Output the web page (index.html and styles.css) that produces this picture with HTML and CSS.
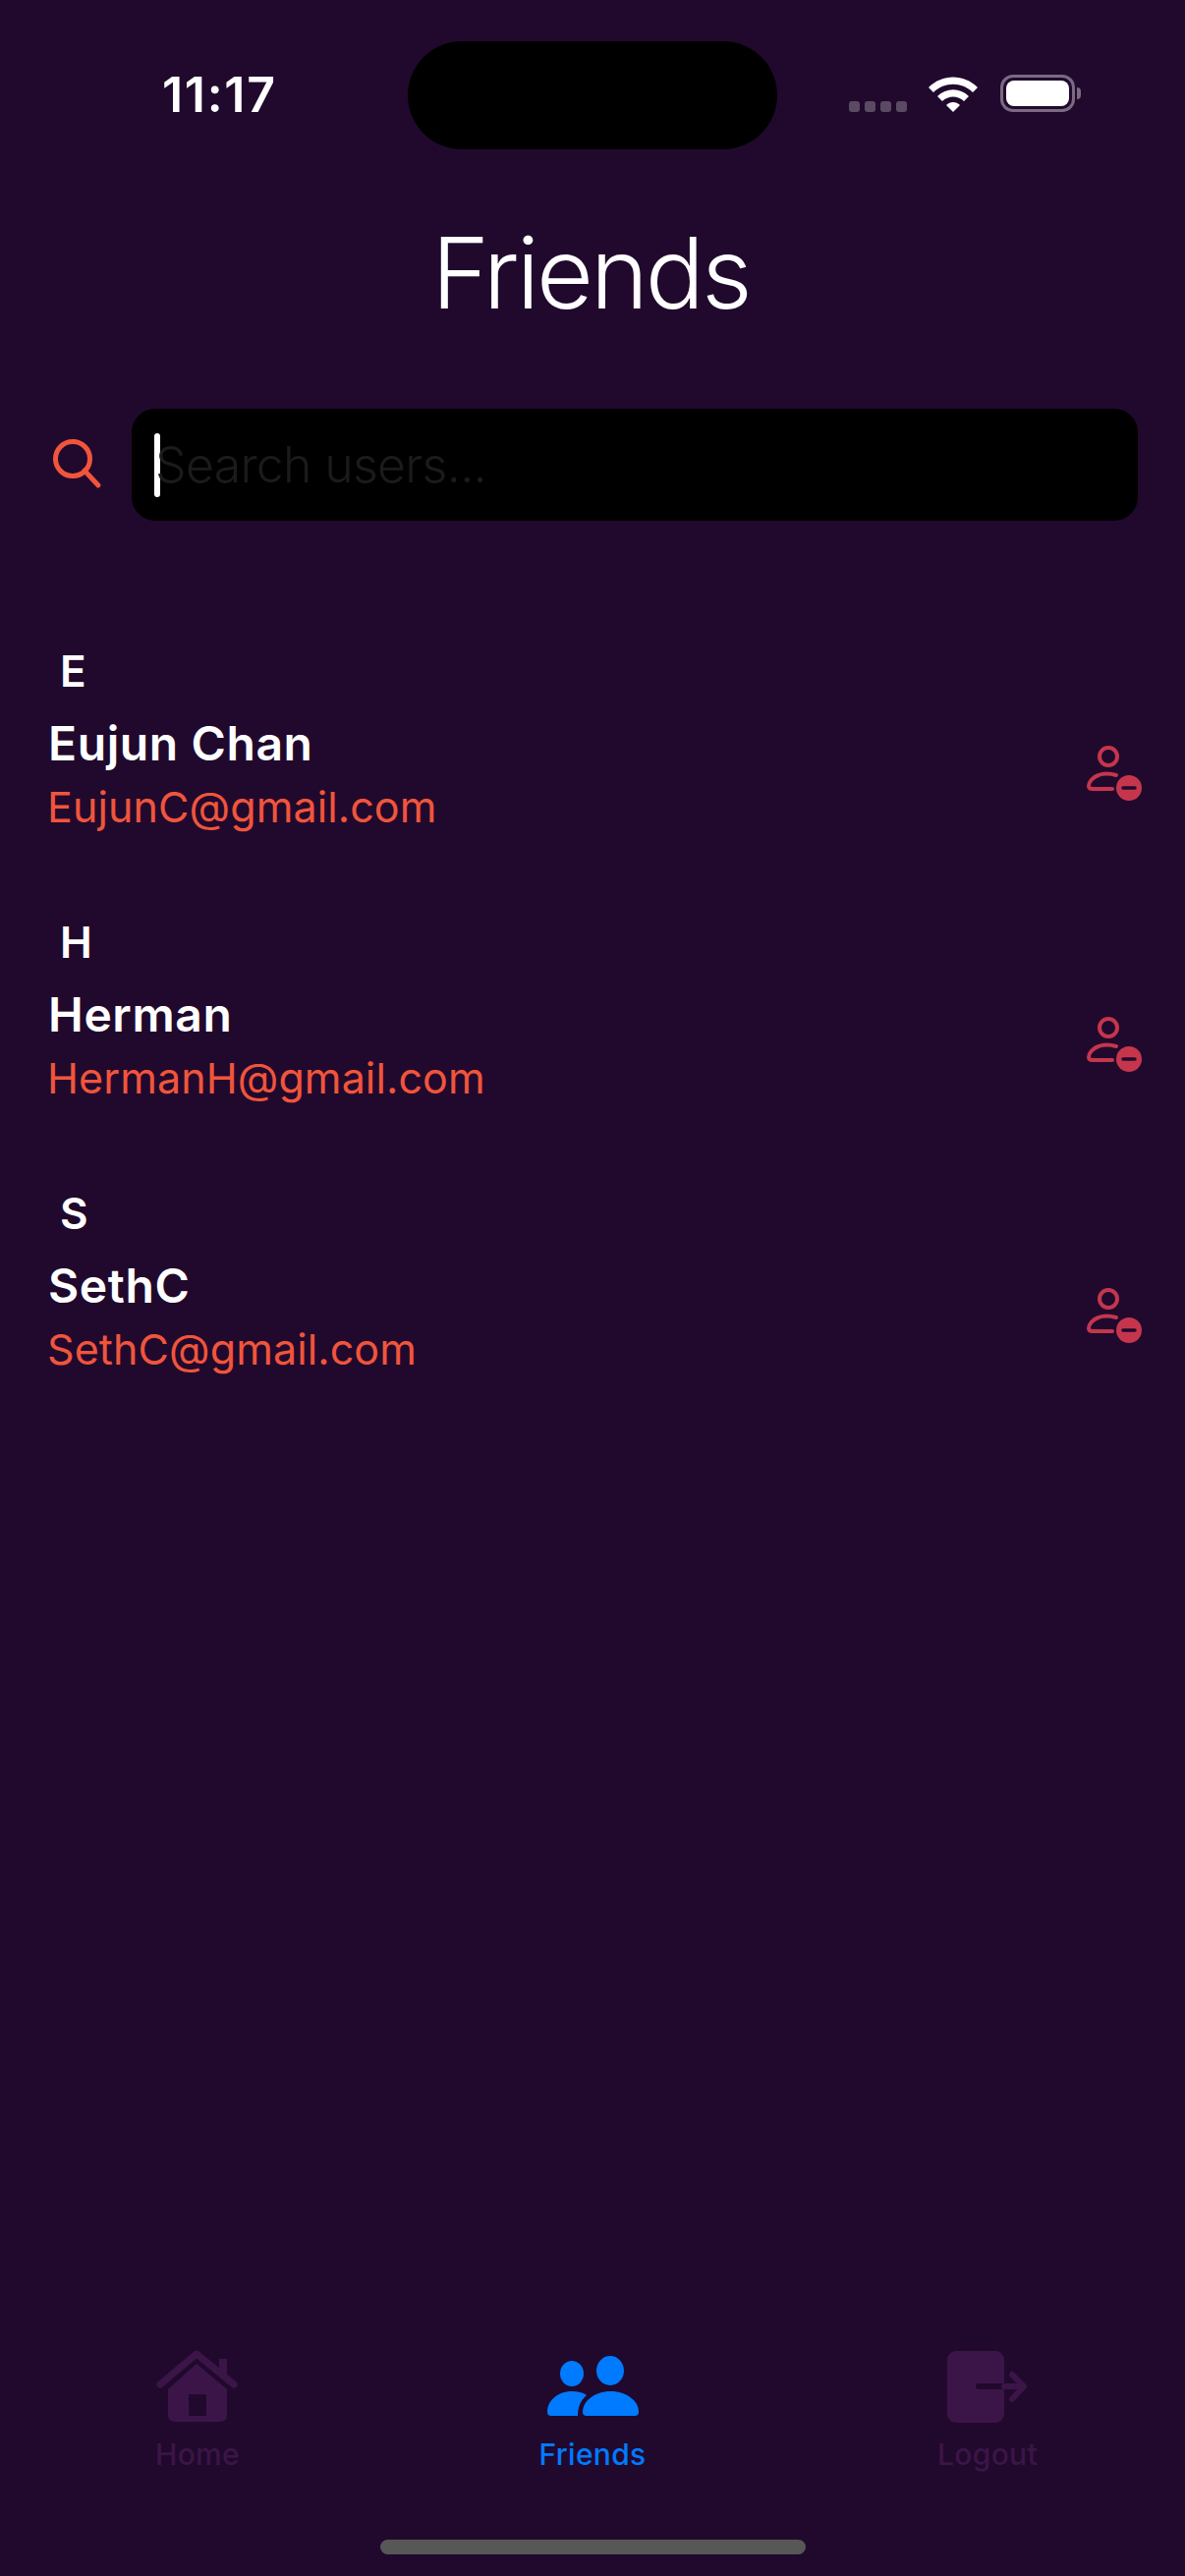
FILE: index.html
```html
<!DOCTYPE html>
<html lang="en">
  <head>
    <meta charset="UTF-8" />
    <title>Friends</title>
    <link rel="stylesheet" href="styles.css">
  </head>
  <body>
    <div id="screen">
      <div id="island"></div>

      <div id="status">
        <span id="time">11:17</span>
        <div id="status-icons">
          <div id="signal"><i></i><i></i><i></i><i></i></div>
          <svg id="wifi" width="52" height="38" viewBox="0 0 52 38">
            <path d="M1 13 C15 -1 37 -1 51 13 L46 18 C35 7 17 7 6 18Z" />
            <path d="M10 22 C19 13 33 13 42 22 L37 27 C31 21 21 21 15 27Z" />
            <path d="M19 31 C23 27 29 27 33 31 L26 38Z" />
          </svg>
          <div id="battery"><div id="battery-fill"></div></div>
          <div id="battery-nub"></div>
        </div>
      </div>

      <h1 id="title">Friends</h1>

      <div id="search">
        <svg class="search-icon" width="52" height="52" viewBox="0 0 52 52">
          <circle cx="21" cy="20" r="17.5" />
          <path d="M33 32 L47 47" />
        </svg>
        <div id="search-box">
          <span id="caret"></span>
          <span id="placeholder">Search users...</span>
        </div>
      </div>

      <ul id="friends">
        <li class="friend">
          <div class="letter">E</div>
          <div class="friend-row">
            <div class="friend-text">
              <div class="name">Eujun Chan</div>
              <div class="email">EujunC@gmail.com</div>
            </div>
            <svg class="remove" width="58" height="58" viewBox="26 18 58 58">
              <circle class="line" cx="49" cy="29" r="9" />
              <path class="line" d="M57 48 C50 46 44 46 39 48 C33 50 29 55 29 59 C29 61 30 62 33 62 H53" />
              <circle class="fill" cx="70" cy="61" r="13" />
              <path class="bar" d="M64 61 H76" />
            </svg>
          </div>
        </li>
        <li class="friend">
          <div class="letter">H</div>
          <div class="friend-row">
            <div class="friend-text">
              <div class="name">Herman</div>
              <div class="email">HermanH@gmail.com</div>
            </div>
            <svg class="remove" width="58" height="58" viewBox="26 18 58 58">
              <circle class="line" cx="49" cy="29" r="9" />
              <path class="line" d="M57 48 C50 46 44 46 39 48 C33 50 29 55 29 59 C29 61 30 62 33 62 H53" />
              <circle class="fill" cx="70" cy="61" r="13" />
              <path class="bar" d="M64 61 H76" />
            </svg>
          </div>
        </li>
        <li class="friend">
          <div class="letter">S</div>
          <div class="friend-row">
            <div class="friend-text">
              <div class="name">SethC</div>
              <div class="email">SethC@gmail.com</div>
            </div>
            <svg class="remove" width="58" height="58" viewBox="26 18 58 58">
              <circle class="line" cx="49" cy="29" r="9" />
              <path class="line" d="M57 48 C50 46 44 46 39 48 C33 50 29 55 29 59 C29 61 30 62 33 62 H53" />
              <circle class="fill" cx="70" cy="61" r="13" />
              <path class="bar" d="M64 61 H76" />
            </svg>
          </div>
        </li>
      </ul>

      <div id="tabs">
        <div class="tab">
          <svg width="84" height="76" viewBox="38 32 84 76">
            <path class="dim" d="M102 41 H110 V58 H102Z" />
            <path class="roof" d="M42 67 L79 36 L117 67" />
            <path class="dim" fill-rule="evenodd" d="M79 46 L110 72 V98 Q110 105 103 105 H57 Q50 105 50 98 V72Z M71 77 V99 H89 V77Z" />
          </svg>
          <span>Home</span>
        </div>
        <div class="tab tab-sel">
          <svg width="100" height="76" viewBox="52 32 100 76">
            <ellipse cx="120" cy="53" rx="14" ry="15" />
            <ellipse cx="81" cy="56" rx="12" ry="13" />
            <path d="M92 95 C92 84 104 74 120.5 74 C137 74 149 84 149 95 A4 4 0 0 1 145 99 H96 A4 4 0 0 1 92 95Z" />
            <path d="M56 95 C56 84 66 74 81 74 C87 74 92 75 96 78 C90 83 87 90 87 99 H60 A4 4 0 0 1 56 95Z" />
          </svg>
          <span>Friends</span>
        </div>
        <div class="tab">
          <svg width="90" height="76" viewBox="60 32 90 76">
            <rect class="dim" x="64" y="33" width="58" height="73" rx="9" />
            <path class="cut" d="M96 69 H122" />
            <path class="arrow" d="M122 69 H141 M130 57 L142 69 L130 82" />
          </svg>
          <span>Logout</span>
        </div>
      </div>

      <div id="home-bar"></div>
    </div>
  </body>
</html>
```

FILE: styles.css
```css
* {
  margin: 0;
  padding: 0;
  box-sizing: border-box;
}
li {
  list-style: none;
}

body {
  background: #21092d;
  font-family: Inter, "Noto Sans", sans-serif;
  color: #fff;
}

#screen {
  width: 1206px;
  height: 2622px;
  position: relative;
  overflow: hidden;
  display: flex;
  flex-direction: column;
}

#island {
  position: absolute;
  left: 415px;
  top: 42px;
  width: 376px;
  height: 110px;
  border-radius: 55px;
  background: #000;
}

/* status bar */
#status {
  height: 192px;
  padding: 66px 106px 0 165px;
  display: flex;
  justify-content: space-between;
  align-items: flex-start;
}

#time {
  font-size: 50px;
  line-height: 60px;
  font-weight: 600;
  letter-spacing: 1.7px;
}

#status-icons {
  display: flex;
  align-items: flex-start;
  padding-top: 10px;
}

#signal {
  display: flex;
  gap: 5px;
  margin-top: 27px;
  margin-right: 21px;
}

#signal i {
  width: 11px;
  height: 11px;
  border-radius: 3px;
  background: #5b4a64;
}

#wifi {
  fill: #fff;
  margin-right: 22px;
}

#battery {
  width: 76px;
  height: 38px;
  border: 3px solid #7a6a82;
  border-radius: 13px;
  padding: 3px;
}

#battery-fill {
  height: 100%;
  background: #fff;
  border-radius: 8px;
}

#battery-nub {
  width: 4px;
  height: 12px;
  margin: 13px 0 0 2px;
  background: #7a6a82;
  border-radius: 0 4px 4px 0;
}

/* title */
#title {
  height: 120px;
  margin-top: 36px;
  padding-right: 4px;
  text-align: center;
  font-size: 100px;
  line-height: 100px;
  font-weight: 300;
  letter-spacing: -3px;
}

/* search */
#search {
  margin-top: 68px;
  padding: 0 48px 0 53px;
  display: flex;
  align-items: center;
  gap: 29px;
}

.search-icon {
  fill: none;
  stroke: #f0553c;
  stroke-width: 5;
  stroke-linecap: round;
  flex: none;
}

#search-box {
  flex: 1;
  height: 114px;
  border-radius: 24px;
  background: #000;
  padding-left: 23px;
  display: flex;
  align-items: center;
}

#caret {
  width: 6px;
  height: 65px;
  border-radius: 3px;
  background: #fff;
  flex: none;
}

#placeholder {
  margin-left: -5px;
  font-size: 50px;
  font-weight: 300;
  letter-spacing: -0.7px;
  color: #1b1b1b;
}

/* list */
#friends {
  margin-top: 126px;
  padding: 0 43px 0 49px;
}

.friend {
  height: 276px;
}

.letter {
  padding-left: 12px;
  font-size: 44px;
  line-height: 54px;
  font-weight: 600;
}

.friend-row {
  display: flex;
  justify-content: space-between;
  align-items: center;
  margin-top: 17px;
}

.name {
  font-size: 48px;
  line-height: 60px;
  font-weight: 600;
  letter-spacing: 0.6px;
}

.email {
  margin: 6px 0 0 -1px;
  font-size: 43px;
  line-height: 56px;
  letter-spacing: 0.1px;
  color: #f0553c;
}

.remove {
  flex: none;
}

.remove .line {
  fill: none;
  stroke: #c5364d;
  stroke-width: 4;
  stroke-linecap: round;
}

.remove .fill {
  fill: #c5364d;
}

.remove .bar {
  stroke: #21092d;
  stroke-width: 3.5;
  stroke-linecap: round;
}

/* tab bar */
#tabs {
  position: absolute;
  left: 0;
  right: 0;
  top: 2392px;
  display: flex;
}

.tab {
  flex: 1;
  display: flex;
  flex-direction: column;
  align-items: center;
  color: #3b1548;
  font-size: 30px;
  line-height: 40px;
  font-weight: 500;
  letter-spacing: 0.3px;
}

.tab svg {
  margin-bottom: 10px;
}

.tab-sel {
  color: #007aff;
  fill: #007aff;
}

.dim {
  fill: #3b1548;
}

.roof {
  fill: none;
  stroke: #3b1548;
  stroke-width: 7;
  stroke-linecap: round;
  stroke-linejoin: round;
}

.cut {
  stroke: #21092d;
  stroke-width: 6;
  stroke-linecap: round;
}

.arrow {
  fill: none;
  stroke: #3b1548;
  stroke-width: 6;
  stroke-linecap: round;
  stroke-linejoin: round;
}

#home-bar {
  position: absolute;
  left: 387px;
  top: 2585px;
  width: 433px;
  height: 15px;
  border-radius: 8px;
  background: #575757;
}
```
